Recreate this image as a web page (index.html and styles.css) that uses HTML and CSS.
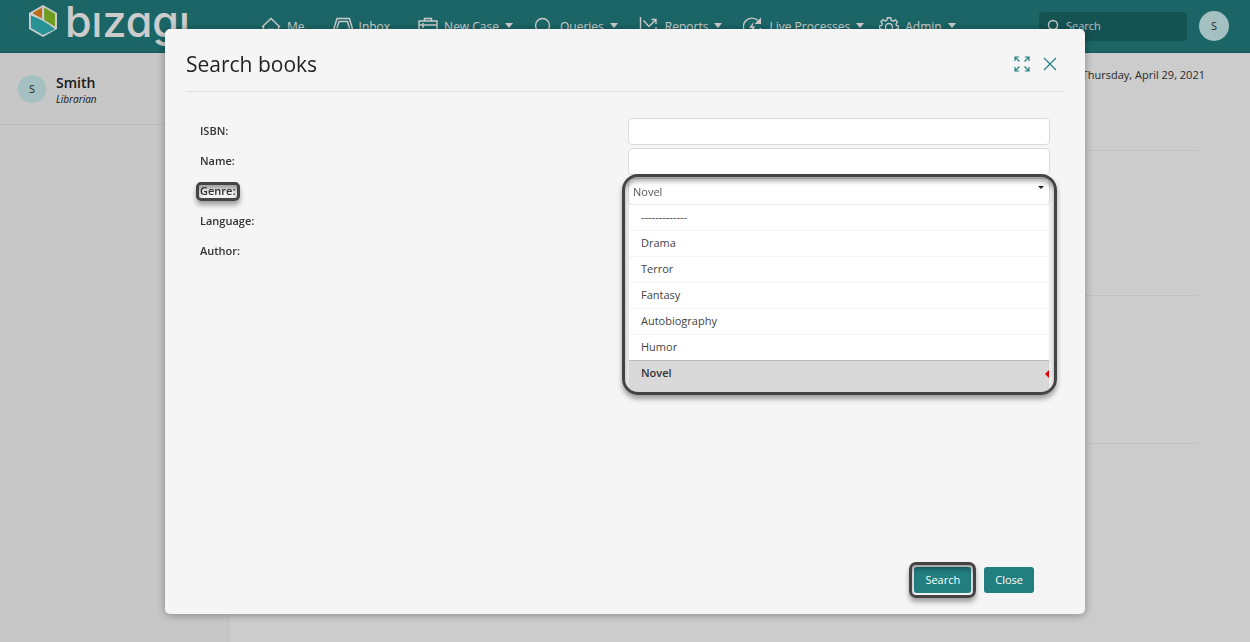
FILE: index.html
```html
<!DOCTYPE html>
<html lang="en">
<head>
<meta charset="utf-8">
<title>Search books</title>
<link rel="stylesheet" href="styles.css">
</head>
<body>
<header class="topbar">
  <a class="brand" href="#">
    <svg class="brand-mark" viewBox="0 0 28 32" aria-hidden="true">
      <path fill="#fff" d="M14 0 28 8V24L14 32 0 24V8Z"/>
      <path fill="#f0861c" d="M13 2.600V13.500L4 8.600V7.700Z"/>
      <path fill="#8ac52b" d="M15.200 2.600 26 8.800V21.500L15.200 15Z"/>
      <path fill="#31b8bb" d="M1.900 10.500Q16 15.500 26 24.300L14 30 1.900 23Z"/>
    </svg>
    <span class="brand-name">bızagı</span>
  </a>
  <nav class="menu">
    <a class="plain" href="#"><svg class="ico" viewBox="0 0 20 20"><path d="M1 10 10 1.500 19 10M2.500 9V19H17.500V9M7.500 19V12.500H12.500V19"/></svg>Me</a>
    <a class="plain" href="#"><svg class="ico" viewBox="0 0 20 20"><path d="M0.800 12 4 1.500H16.500L19.500 12V18H0.800ZM1 12.500H6L8 15H12.500L14.500 12.500H19.500M4 11 6 4.500H14.500L16.500 11"/></svg>Inbox</a>
    <a href="#"><svg class="ico" viewBox="0 0 20 20"><path d="M1 4H19V18H1ZM6.500 4V1.500H13.500V4M1 8H19M5 6V11"/></svg>New Case<span class="caret"></span></a>
    <a href="#"><svg class="ico" viewBox="0 0 20 20"><circle cx="8.500" cy="8.500" r="7"/><path d="M13.500 13.500 19 19"/></svg>Queries<span class="caret"></span></a>
    <a href="#"><svg class="ico" viewBox="0 0 20 20"><path d="M1.500 0V19H19M4.500 3.500 10 9.500 17 2.500M12.500 2.500H17V7M17 10V16M13 12V16"/></svg>Reports<span class="caret"></span></a>
    <a href="#"><svg class="ico" viewBox="0 0 20 20"><path d="M3 16A8 8 0 0 1 15 3.500M17.500 11A8 8 0 0 1 9 18.500"/><path class="solid" d="M18 0.500V7H11.500L14 4.500 16 2.500ZM10.500 5 6 11H9L8 15.500 12.500 9.500H9.700Z"/></svg>Live Processes<span class="caret"></span></a>
    <a class="last" href="#"><svg class="ico" viewBox="0 0 20 20"><circle cx="10" cy="10" r="3.500"/><path d="M8.300 0.800H11.700L12.300 3.300 14.100 4.100 16.400 2.800 18.400 5 17 7.100 17.500 8.700 19.500 9V11.500L17.200 12.200 16.500 14 17.800 16.200 15.900 18 13.700 16.700 12 17.300 11.500 19.500H8.500L7.900 17.300 6.200 16.600 4 17.800 2.200 16 3.400 13.900 2.700 12.200 0.500 11.500V9L2.600 8.500 3.400 6.800 2 4.600 4 2.700 6.200 4 7.800 3.300Z"/></svg>Admin<span class="caret"></span></a>
  </nav>
  <label class="quick">
    <svg class="quick-ico" viewBox="0 0 14 14"><circle cx="6" cy="6" r="4.500"/><path d="M9.500 9.500 13 13"/></svg>
    <input type="search" placeholder="Search" aria-label="Search">
  </label>
  <button class="avatar avatar-top" type="button">S</button>
</header>

<div class="page">
  <aside class="side">
    <div class="profile">
      <span class="avatar">S</span>
      <div class="profile-text">
        <div class="profile-name">Smith</div>
        <div class="profile-role">Librarian</div>
      </div>
    </div>
  </aside>
  <main class="content">
    <time class="today" datetime="2021-04-29">Thursday, April 29, 2021</time>
    <section class="block block-first"></section>
    <section class="block"></section>
    <section class="block"></section>
  </main>
</div>

<div class="overlay">
  <div class="dialog" role="dialog" aria-labelledby="dialog-title">
    <div class="dialog-head">
      <h1 id="dialog-title">Search books</h1>
      <button class="tool" type="button" aria-label="Expand"><svg viewBox="0 0 16 16"><path d="M1 5V1H5M1 1 5.500 5.500M11 1H15V5M15 1 10.500 5.500M1 11V15H5M1 15 5.500 10.500M11 15H15V11M15 15 10.500 10.500"/></svg></button>
      <button class="tool" type="button" aria-label="Close dialog"><svg viewBox="0 0 16 16"><path d="M2 2 14 14M14 2 2 14"/></svg></button>
    </div>
    <form class="form">
      <div class="row"><div><label for="isbn">ISBN:</label></div><input class="field" id="isbn" type="text"></div>
      <div class="row"><div><label for="name">Name:</label></div><input class="field" id="name" type="text"></div>
      <div class="row">
        <div><label class="marked marked-label" for="genre">Genre:</label></div>
        <div class="combo marked marked-combo">
          <select class="field" id="genre"><option>Novel</option></select>
          <ul class="options" role="listbox" aria-label="Genre">
            <li role="option">-------------</li>
            <li role="option">Drama</li>
            <li role="option">Terror</li>
            <li role="option">Fantasy</li>
            <li role="option">Autobiography</li>
            <li role="option">Humor</li>
            <li role="option" class="selected" aria-selected="true">Novel</li>
          </ul>
        </div>
      </div>
      <div class="row"><div><label for="language">Language:</label></div><input class="field" id="language" type="text"></div>
      <div class="row"><div><label for="author">Author:</label></div><input class="field" id="author" type="text"></div>
    </form>
    <div class="actions">
      <span class="marked marked-button"><button class="btn" type="button">Search</button></span>
      <button class="btn" type="button">Close</button>
    </div>
  </div>
</div>
</body>
</html>
```
FILE: styles.css
```css
* { box-sizing: border-box; }

body {
  margin: 0;
  min-height: 100vh;
  display: flex;
  flex-direction: column;
  background: #fff;
  color: #333;
  font: 11px/16px "Open Sans", "Noto Sans", sans-serif;
}

button, input, select { font: inherit; color: inherit; }

a { color: inherit; text-decoration: none; }

/* top bar */
.topbar {
  display: flex;
  align-items: center;
  height: 53px;
  padding: 0 21px 0 29px;
  background: #227f80;
  border-bottom: 1px solid #1b6c6d;
  color: #fff;
}

.brand {
  display: flex;
  align-items: center;
  gap: 8px;
  width: 232px;
}

.brand-mark { width: 28px; height: 32px; margin-bottom: 10px; }

.brand-name {
  font: 500 43px/44px Inter, sans-serif;
  font-feature-settings: "cv11";
  margin-bottom: 10px;
}

.menu {
  display: flex;
  flex: 1;
  gap: 21px;
  padding-top: 2px;
  font-size: 12px;
}

.menu a { display: flex; align-items: center; gap: 6px; white-space: nowrap; }

.menu .plain { padding-right: 7px; }

.menu .last { margin-left: -6px; }

.ico { width: 20px; height: 20px; }

.ico, .quick-ico, .tool svg { fill: none; stroke: currentColor; stroke-width: 1.4; }

.ico .solid { fill: currentColor; stroke: none; }

.caret {
  margin-bottom: 3px;
  border: 4px solid transparent;
  border-top: 5px solid currentColor;
  border-bottom: 0;
}

.quick {
  display: flex;
  align-items: center;
  gap: 5px;
  width: 148px;
  height: 29px;
  padding: 0 8px;
  border-radius: 4px;
  background: #1b6767;
}

.quick-ico { width: 14px; height: 14px; flex: none; }

.quick input {
  width: 100%;
  padding: 0;
  border: 0;
  background: none;
  outline: 0;
}

.quick input::placeholder { color: #e4eeee; }

.avatar {
  display: grid;
  place-items: center;
  width: 28px;
  height: 28px;
  padding: 0;
  border: 0;
  border-radius: 50%;
  background: #cdf0f0;
  color: #333;
}

.avatar-top { width: 30px; height: 30px; margin-left: 12px; }

/* page behind the dialog */
.page { display: flex; flex: 1; }

.side {
  width: 229px;
  background: #f9f9f9;
  border-right: 1px solid #f0f0f0;
}

.profile {
  display: flex;
  align-items: center;
  gap: 10px;
  height: 72px;
  padding: 0 18px;
  border-bottom: 1px solid #e8e8e8;
}

.profile-text { padding-top: 4px; }

.profile-name { font-size: 14px; font-weight: 600; color: #222; }

.profile-role { font-size: 10px; font-style: italic; color: #222; }

.content {
  display: flex;
  flex: 1;
  flex-direction: column;
  padding: 14px 45px 0 20px;
}

.today { align-self: flex-end; }

.block { height: 148px; margin-right: 6px; border-bottom: 1px solid #f2f2f2; }

.block-first { height: 68px; }

.block:nth-child(3) { height: 145px; }

/* dialog */
.overlay {
  position: fixed;
  inset: 0;
  display: flex;
  padding: 29px 165px 28px;
  background: rgba(0, 0, 0, 0.2);
}

.dialog {
  display: flex;
  flex: 1;
  flex-direction: column;
  padding: 0 21px 21px;
  border-radius: 5px;
  background: #f5f5f5;
  box-shadow: 0 1px 8px rgba(0, 0, 0, 0.35);
}

.dialog-head {
  display: flex;
  align-items: center;
  gap: 12px;
  height: 63px;
  padding: 7px 6px 0 0;
  border-bottom: 1px solid #e0e0e0;
}

.dialog-head h1 {
  flex: 1;
  margin: 0;
  font-size: 21px;
  line-height: 28px;
  font-weight: 400;
  color: #222;
}

.tool {
  display: grid;
  padding: 0;
  border: 0;
  background: none;
  color: #227f80;
}

.tool svg { width: 16px; height: 16px; stroke-width: 1.2; }

.form {
  display: grid;
  gap: 3px;
  padding: 26px 14px 0;
}

.row {
  display: grid;
  grid-template-columns: 1fr 1fr;
  align-items: center;
  gap: 6px;
  height: 27px;
}

.row > :first-child { padding-bottom: 2px; }

.row label { font-weight: 600; }

.field {
  display: block;
  width: 100%;
  height: 27px;
  padding: 0 4px;
  border: 1px solid #dcdcdc;
  border-radius: 4px;
  background: #fff;
  color: #555;
}

select.field { appearance: none; }

.combo { position: relative; }

/* drop-down arrow of the combo */
.combo::before {
  content: "";
  position: absolute;
  top: 8px;
  right: 6px;
  border: 3px solid transparent;
  border-top-color: #222;
  border-bottom: 0;
}

.options {
  position: absolute;
  z-index: 1;
  top: 26px;
  left: 0;
  right: 0;
  margin: 0;
  padding: 0;
  list-style: none;
  background: #fff;
  border: solid #ececec;
  border-width: 1px 1px 0;
  color: #444;
}

.options li {
  height: 26px;
  padding: 4px 12px;
  border-bottom: 1px solid #f5f5f5;
}

.options .selected {
  display: flex;
  align-items: start;
  justify-content: space-between;
  height: 33px;
  margin-top: -1px;
  padding: 4px 0 4px 12px;
  border: 0;
  border-top: 1px solid #bbb;
  background: #d9d9d9;
  color: #333;
  font-weight: 600;
}

.options .selected::after {
  content: "";
  margin-top: 5px;
  border: 4px solid transparent;
  border-right-color: #e00;
  border-left: 0;
}

/* rounded frames that call out parts of the form */
.marked { position: relative; }

.marked::after {
  content: "";
  position: absolute;
  z-index: 2;
  border: 3px solid #444;
  box-shadow: 0 4px 5px rgba(0, 0, 0, 0.35), inset 0 4px 5px rgba(0, 0, 0, 0.35);
  pointer-events: none;
}

.marked-label::after { inset: -1px -5px -3px -4px; border-radius: 5px; }

.marked-combo::after { inset: -4px -7px -190px -6px; border-radius: 16px; }

.marked-button::after { inset: -5px; border-radius: 7px; }

.actions {
  display: flex;
  justify-content: flex-end;
  gap: 13px;
  margin-top: auto;
  padding-right: 30px;
}

.btn {
  display: block;
  height: 26px;
  padding: 0 11px;
  border: 0;
  border-radius: 3px;
  background: #227f80;
  color: #fff;
}
```
